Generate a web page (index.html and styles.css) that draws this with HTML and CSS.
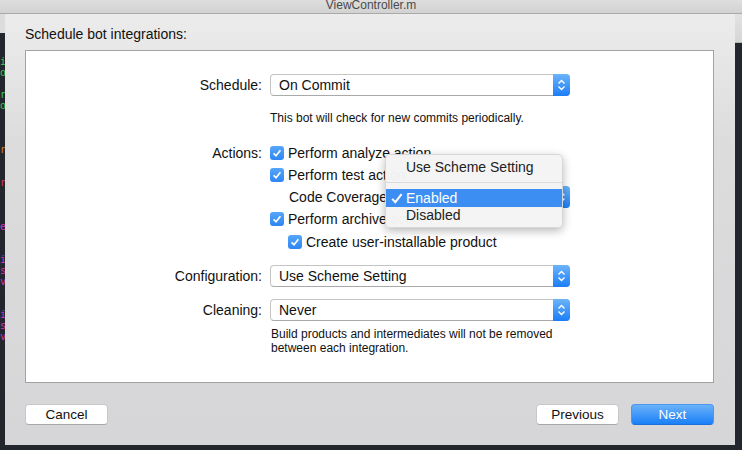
FILE: index.html
```html
<!DOCTYPE html>
<html>
<head>
<meta charset="utf-8">
<link rel="stylesheet" href="styles.css">
</head>
<body>
<div class="titlebar">ViewController.m</div>
<div class="main">
  <div class="strip strip-left">
    <div class="stub stub-left"></div>
    <div class="code">
      <div class="g">id</div>
      <div class="g">ob</div>
      <div>&nbsp;</div>
      <div class="g">re</div>
      <div class="g">op</div>
      <div>&nbsp;</div>
      <div>&nbsp;</div>
      <div>&nbsp;</div>
      <div class="o">re</div>
      <div>&nbsp;</div>
      <div>&nbsp;</div>
      <div class="r">re</div>
      <div>&nbsp;</div>
      <div>&nbsp;</div>
      <div>&nbsp;</div>
      <div class="m">en</div>
      <div>&nbsp;</div>
      <div>&nbsp;</div>
      <div class="m">id</div>
      <div class="m">se</div>
      <div class="m">vo</div>
      <div>&nbsp;</div>
      <div>&nbsp;</div>
      <div class="m">id</div>
      <div class="m">se</div>
      <div class="m">vo</div>
    </div>
  </div>

  <div class="sheet">
    <div class="sheet-title">Schedule bot integrations:</div>
    <div class="box">
      <div class="row row-schedule">
        <div class="label">Schedule:</div>
        <div class="control">
          <div class="select"><span class="select-text">On Commit</span><span class="arrow"><svg width="17" height="22" viewBox="0 0 17 22"><path d="M5.5 9.5 L8.5 6.5 L11.5 9.5 M5.5 12.5 L8.5 15.5 L11.5 12.5" fill="none" stroke="#fff" stroke-width="1.4"/></svg></span></div>
        </div>
      </div>
      <div class="hint hint-schedule">This bot will check for new commits periodically.</div>

      <div class="actions">
        <div class="row crow">
          <div class="label">Actions:</div>
          <div class="control"><span class="cb"><svg width="14" height="14" viewBox="0 0 14 14"><path d="M3.6 7.4 L6 9.8 L10.4 4.2" fill="none" stroke="#fff" stroke-width="1.7"/></svg></span><span class="cb-text">Perform analyze action</span></div>
        </div>
        <div class="row crow">
          <div class="label"></div>
          <div class="control"><span class="cb"><svg width="14" height="14" viewBox="0 0 14 14"><path d="M3.6 7.4 L6 9.8 L10.4 4.2" fill="none" stroke="#fff" stroke-width="1.7"/></svg></span><span class="cb-text">Perform test action</span></div>
        </div>
        <div class="row crow">
          <div class="label"></div>
          <div class="control cov">
            <span class="cov-text">Code Coverage:</span>
            <div class="select select-cov"><span class="select-text"></span><span class="arrow"><svg width="17" height="22" viewBox="0 0 17 22"><path d="M5.5 9.5 L8.5 6.5 L11.5 9.5 M5.5 12.5 L8.5 15.5 L11.5 12.5" fill="none" stroke="#fff" stroke-width="1.4"/></svg></span></div>
            <div class="menu">
              <div class="menu-item first">Use Scheme Setting</div>
              <div class="menu-sep"></div>
              <div class="menu-item selected"><svg class="menu-check" width="12" height="11" viewBox="0 0 12 11"><path d="M1.2 5.8 L4.3 9.2 L10.6 1.2" fill="none" stroke="#fff" stroke-width="2"/></svg>Enabled</div>
              <div class="menu-item">Disabled</div>
            </div>
          </div>
        </div>
        <div class="row crow">
          <div class="label"></div>
          <div class="control"><span class="cb"><svg width="14" height="14" viewBox="0 0 14 14"><path d="M3.6 7.4 L6 9.8 L10.4 4.2" fill="none" stroke="#fff" stroke-width="1.7"/></svg></span><span class="cb-text">Perform archive action</span></div>
        </div>
        <div class="row crow">
          <div class="label"></div>
          <div class="control sub"><span class="cb"><svg width="14" height="14" viewBox="0 0 14 14"><path d="M3.6 7.4 L6 9.8 L10.4 4.2" fill="none" stroke="#fff" stroke-width="1.7"/></svg></span><span class="cb-text">Create user-installable product</span></div>
        </div>
      </div>

      <div class="row row-config">
        <div class="label">Configuration:</div>
        <div class="control">
          <div class="select"><span class="select-text">Use Scheme Setting</span><span class="arrow"><svg width="17" height="22" viewBox="0 0 17 22"><path d="M5.5 9.5 L8.5 6.5 L11.5 9.5 M5.5 12.5 L8.5 15.5 L11.5 12.5" fill="none" stroke="#fff" stroke-width="1.4"/></svg></span></div>
        </div>
      </div>
      <div class="row row-clean">
        <div class="label">Cleaning:</div>
        <div class="control">
          <div class="select"><span class="select-text">Never</span><span class="arrow"><svg width="17" height="22" viewBox="0 0 17 22"><path d="M5.5 9.5 L8.5 6.5 L11.5 9.5 M5.5 12.5 L8.5 15.5 L11.5 12.5" fill="none" stroke="#fff" stroke-width="1.4"/></svg></span></div>
        </div>
      </div>
      <div class="hint hint-clean">Build products and intermediates will not be removed<br>between each integration.</div>
    </div>
    <div class="buttons">
      <button class="btn">Cancel</button>
      <button class="btn btn-prev">Previous</button>
      <button class="btn btn-next">Next</button>
    </div>
  </div>

  <div class="strip strip-right">
    <div class="stub stub-right"></div>
  </div>
</div>
</body>
</html>
```

FILE: styles.css
```css
* { box-sizing: border-box; }
html, body {
  margin: 0;
  padding: 0;
}
body {
  width: 742px;
  height: 450px;
  overflow: hidden;
  background: #23262c;
  font-family: "Liberation Sans", Arial, sans-serif;
  font-size: 14px;
  color: #111;
}
.titlebar {
  height: 14px;
  line-height: 10px;
  font-size: 12px;
  text-align: center;
  color: #4a4a4a;
  background: linear-gradient(#dedede, #d2d2d2);
  border-bottom: 1px solid #a9a9a9;
  overflow: hidden;
}
.main {
  display: flex;
  height: 431px;
}
.strip {
  overflow: hidden;
}
.strip-left { width: 5px; }
.strip-right { width: 7px; }
.stub {
  background: #dcdcdc;
}
.stub-left { height: 19px; }
.stub-right { height: 29px; background: linear-gradient(#e2e2e2, #d6d6d6); border-bottom: 1px solid #b8b8b8; }
.code {
  padding-top: 23px;
  font-family: "DejaVu Sans Mono", "Liberation Mono", monospace;
  font-size: 10px;
  line-height: 11px;
  white-space: nowrap;
  color: #ccc;
}
.code .g { color: #3fc653; }
.code .o { color: #d37d32; }
.code .r { color: #d2366d; }
.code .m { color: #cb35bf; }

.sheet {
  width: 730px;
  display: flex;
  flex-direction: column;
  padding: 0 21px 0 20px;
  background: linear-gradient(#ececec 0%, #dcdcdd 30%, #d6d6d8 100%);
}
.sheet-title {
  padding-top: 12px;
  line-height: 16px;
  height: 36px;
  font-size: 14px;
  color: #111;
}
.box {
  height: 333px;
  background: #fff;
  border: 1px solid #a3a3a3;
  padding-top: 23px;
}
.row {
  display: flex;
  align-items: center;
  height: 22px;
}
.label {
  width: 236px;
  margin-right: 8px;
  text-align: right;
  flex: none;
}
.control {
  width: 300px;
  display: flex;
  align-items: center;
  position: relative;
}
.select {
  display: flex;
  align-items: center;
  width: 300px;
  height: 22px;
  background: #fff;
  border: 1px solid #c4c4c4;
  border-bottom-color: #a9a9a9;
  border-radius: 4px;
}
.select-text {
  flex: 1;
  padding-left: 8px;
}
.arrow {
  width: 17px;
  height: 22px;
  margin: -1px -1px -1px 0;
  border-radius: 0 4px 4px 0;
  background: linear-gradient(#6cb4fb, #1b7ef6);
  display: flex;
}
.hint {
  font-size: 12px;
  line-height: 14px;
  padding-left: 244px;
}
.hint-schedule { margin-top: 15px; }
.hint-clean { margin-top: 6px; padding-left: 245px; }
.actions { margin-top: 17px; }
.crow:last-child { margin-top: 1px; }
.cb {
  width: 14px;
  height: 14px;
  border-radius: 3px;
  background: linear-gradient(#56a6f8, #2d86f3);
  display: flex;
  flex: none;
}
.cb-text { margin-left: 4px; white-space: nowrap; }
.control.sub { padding-left: 18px; }
.cov { padding-left: 19px; }
.cov-text { white-space: nowrap; flex: none; }
.select-cov { flex: 1; width: auto; margin-left: 6px; }
.menu {
  position: absolute;
  left: 115px;
  top: -32px;
  width: 178px;
  height: 74px;
  padding-top: 2px;
  background: rgba(244, 244, 244, 0.98);
  border: 1px solid rgba(0, 0, 0, 0.12);
  border-radius: 5px;
  box-shadow: 0 3px 10px rgba(0, 0, 0, 0.28);
  z-index: 2;
}
.menu-item {
  position: relative;
  height: 17px;
  line-height: 17px;
  padding-left: 20px;
  color: #222;
}
.menu-item.first { height: 20px; line-height: 20px; }
.menu-sep {
  height: 1px;
  background: #dcdcdc;
  margin: 5px 0 6px;
}
.menu-item.selected {
  height: 18px;
  line-height: 18px;
  background: #3d8ef3;
  color: #fff;
}
.menu-check {
  position: absolute;
  left: 5px;
  top: 4px;
}
.row-config { margin-top: 12px; }
.row-clean { margin-top: 12px; }
.buttons {
  display: flex;
  margin-top: 21px;
}
.btn {
  width: 83px;
  height: 21px;
  padding: 0;
  font-family: "Liberation Sans", Arial, sans-serif;
  font-size: 13.5px;
  color: #111;
  background: #fff;
  border: 1px solid #c8c8c8;
  border-bottom-color: #a8a8a8;
  border-radius: 4px;
}
.btn-prev { margin-left: auto; }
.btn-next {
  margin-left: 12px;
  color: #fff;
  background: linear-gradient(#6ab2fa, #1a7ff7);
  border-color: #4a96f2;
  border-bottom-color: #1c6fdc;
}
```
